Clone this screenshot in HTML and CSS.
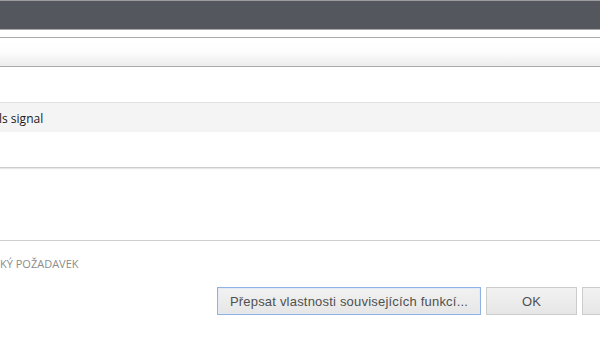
FILE: index.html
```html
<!DOCTYPE html>
<html lang="cs">
<head>
<meta charset="utf-8">
<link rel="stylesheet" href="styles.css">
</head>
<body>
<div class="dialog">
  <div class="titlebar"></div>
  <div class="gap"></div>
  <div class="toolbar"></div>
  <div class="panel">
    <div class="pad-top"></div>
    <div class="row"><span class="row-text">ls signal</span></div>
    <div class="pad-bottom"></div>
  </div>
  <div class="spacer"></div>
  <div class="section">
    <div class="section-label">KÝ POŽADAVEK</div>
  </div>
  <div class="buttons">
    <button class="btn btn-focus">Přepsat vlastnosti souvisejících funkcí...</button>
    <button class="btn btn-ok">OK</button>
    <button class="btn btn-cancel"></button>
  </div>
</div>
</body>
</html>
```
FILE: styles.css
```css
html, body {
  margin: 0;
  padding: 0;
  width: 600px;
  height: 341px;
  overflow: hidden;
  background: #ffffff;
}
.dialog {
  display: flex;
  flex-direction: column;
  width: 600px;
  overflow: hidden;
}
.titlebar {
  height: 28px;
  background: #54585e;
  border-top: 1px solid #9c9c9c;
  border-bottom: 1px solid #a6a8aa;
}
.gap {
  height: 7px;
}
.toolbar {
  height: 28px;
  border-top: 1px solid #a9a9a9;
  border-bottom: 1px solid #a9a9a9;
  background: linear-gradient(#ffffff 0%, #fdfdfd 50%, #ececec 100%);
}
.panel {
  display: flex;
  flex-direction: column;
  border-bottom: 1px solid #cdcdcd;
  box-shadow: 0 1px 1px #e8e8e8;
}
.pad-top {
  height: 35px;
}
.row {
  height: 29px;
  background: #f4f4f4;
  border-top: 1px solid #e2e2e2;
  display: flex;
  align-items: center;
}
.row-text {
  font-family: "Open Sans", "Noto Sans", sans-serif;
  font-size: 12px;
  color: #1a1a1a;
  margin-left: -1px;
  padding-top: 1px;
}
.pad-bottom {
  height: 35px;
}
.spacer {
  height: 72px;
}
.section {
  border-top: 1px solid #cfcfcf;
  height: 46px;
}
.section-label {
  font-family: "Open Sans", "Noto Sans", sans-serif;
  font-size: 11px;
  color: #8c8c8c;
  margin-top: 15px;
}
.buttons {
  display: flex;
  padding-left: 217px;
  gap: 5px;
  overflow: hidden;
}
.btn {
  height: 28px;
  margin: 0;
  padding: 0;
  font-family: "Liberation Sans", Arial, sans-serif;
  font-size: 13px;
  color: #505050;
  background: linear-gradient(#f2f2f2, #e6e6e6);
  border: 1px solid #cccccc;
  border-radius: 0;
  flex-shrink: 0;
}
.btn-focus {
  width: 264px;
  border: 1px solid #8fb1e3;
  box-shadow: inset 0 0 0 1px #e4eaf3;
  letter-spacing: 0.2px;
}
.btn-ok {
  width: 91px;
}
.btn-cancel {
  width: 91px;
}
```
